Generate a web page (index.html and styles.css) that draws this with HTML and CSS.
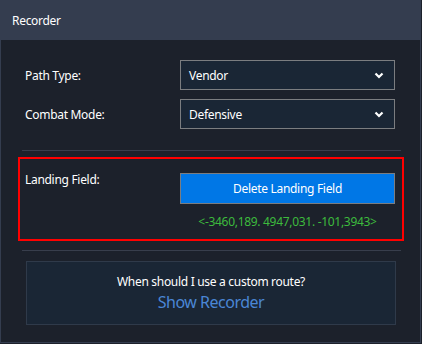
FILE: index.html
```html
<!DOCTYPE html>
<html>
<head>
  <meta charset="UTF-8">
  <link rel="stylesheet" href="styles.css">
</head>
<body>
  <div class="panel">
    <div class="panel-header">Recorder</div>
    <div class="panel-body">
      <!-- Opciones de ruta -->
      <div class="row">
        <label class="row-label">Path Type:</label>
        <div class="select">
          <span>Vendor</span>
          <svg class="chevron" width="10" height="7" viewBox="0 0 10 7"><polyline points="1.5,1.5 5,5 8.5,1.5" fill="none" stroke="#fff" stroke-width="2.2"/></svg>
        </div>
      </div>
      <div class="row">
        <label class="row-label">Combat Mode:</label>
        <div class="select">
          <span>Defensive</span>
          <svg class="chevron" width="10" height="7" viewBox="0 0 10 7"><polyline points="1.5,1.5 5,5 8.5,1.5" fill="none" stroke="#fff" stroke-width="2.2"/></svg>
        </div>
      </div>

      <div class="divider"></div>

      <!-- Zona de aterrizaje -->
      <div class="landing">
        <div class="row-label landing-label">Landing Field:</div>
        <div class="landing-side">
          <button class="btn-delete">Delete Landing Field</button>
          <div class="coords">&lt;-3460,189. 4947,031. -101,3943&gt;</div>
        </div>
      </div>

      <div class="divider divider-bottom"></div>

      <div class="info">
        <div class="info-question">When should I use a custom route?</div>
        <div class="info-link">Show Recorder</div>
      </div>
    </div>
  </div>
</body>
</html>
```

FILE: styles.css
```css
* {
  margin: 0;
  padding: 0;
  box-sizing: border-box;
}

body {
  background: #1c212b;
  font-family: "Noto Sans", "Open Sans", sans-serif;
  font-size: 12px;
  letter-spacing: -0.3px;
  color: #fff;
}

.panel {
  width: 421px;
  height: 343px;
  background: #343d4f;
  padding: 0 1px 1px 1px;
  display: flex;
  flex-direction: column;
}

.panel-header {
  height: 40px;
  padding-left: 11px;
  display: flex;
  align-items: center;
  font-size: 12px;
  color: #fff;
}

.panel-body {
  flex: 1;
  background: #1c212b;
  padding-top: 20px;
}

.row {
  display: grid;
  grid-template-columns: 155px 215px;
  align-items: center;
  padding-left: 24px;
  margin-bottom: 9px;
}

.row-label {
  color: #fff;
}

.select {
  height: 30px;
  border: 1px solid #7b7d80;
  background: #1a2635;
  display: flex;
  align-items: center;
  justify-content: space-between;
  padding: 0 10px 0 8px;
}

.chevron {
  display: block;
}

.divider {
  height: 1px;
  background: #383e4c;
  margin: 21px 0 0 21px;
  width: 379px;
}

.landing {
  margin: 6px 0 0 17px;
  width: 386px;
  height: 84px;
  border: 2px solid #ff0000;
  display: grid;
  grid-template-columns: 155px 215px;
  padding: 14px 0 0 5px;
}

.landing-label {
  margin-top: -2px;
}

.btn-delete {
  display: block;
  width: 215px;
  height: 31px;
  border: 1px solid #7b7d80;
  background: #0077e6;
  color: #fff;
  font-family: inherit;
  font-size: 12px;
  letter-spacing: -0.3px;
}

.coords {
  color: #3dba3d;
  text-align: center;
  margin-top: 9px;
  font-size: 12px;
}

.divider-bottom {
  margin-top: 9px;
}

.info {
  margin: 10px 0 0 25px;
  width: 370px;
  height: 64px;
  border: 1px solid #2f3a4a;
  background: #1a2635;
  display: flex;
  flex-direction: column;
  align-items: center;
  padding-top: 11px;
}

.info-question {
  font-size: 12px;
  color: #fff;
}

.info-link {
  font-size: 16px;
  letter-spacing: -0.5px;
  color: #4a86d6;
  margin-top: 1px;
}
```
